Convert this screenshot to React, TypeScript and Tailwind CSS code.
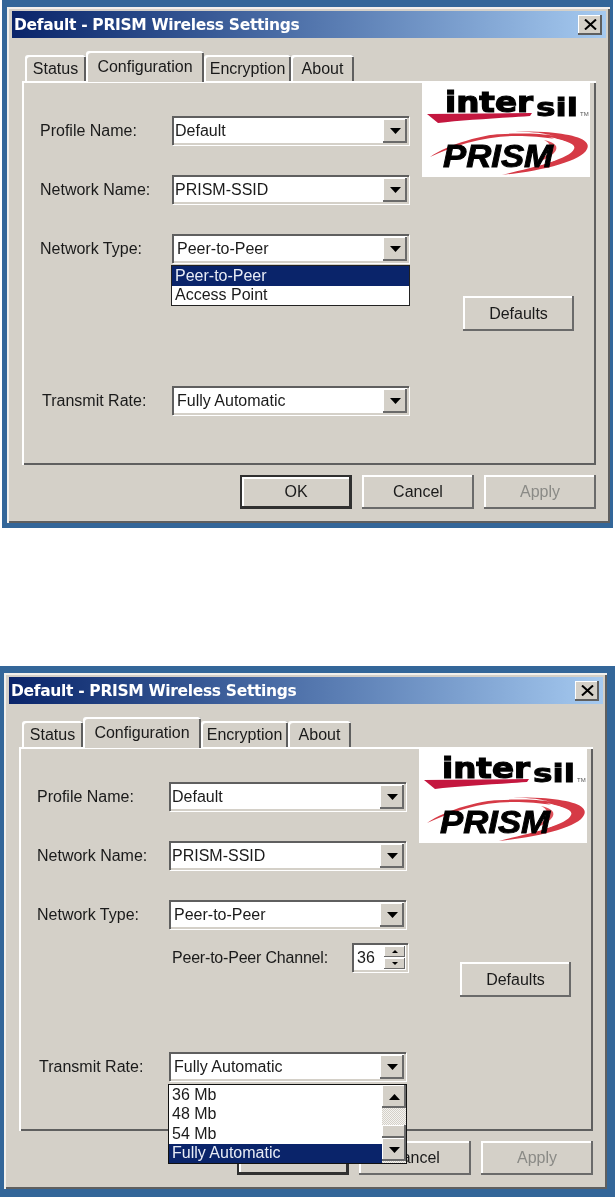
import React from "react";

const raised = "shadow-[inset_-2px_-2px_0_#6a6a6a,inset_2px_2px_0_#ffffff]";
const face = "bg-[#d4d0c8]";
const ui = "font-['Liberation_Sans',Arial,sans-serif] text-[16px] text-[#1a1a1a]";

function Arrow({ up = false, small = false }: { up?: boolean; small?: boolean }) {
  const w = small ? 6 : 11;
  const h = small ? 3 : 6;
  return (
    <svg width={w} height={h} viewBox="0 0 10 5" className="block" preserveAspectRatio="none">
      <path d={up ? "M5 0 L10 5 L0 5 Z" : "M0 0 L10 0 L5 5 Z"} fill="#000" />
    </svg>
  );
}

function Combo({ value, wide }: { value: string; wide?: boolean }) {
  return (
    <div className={`relative h-[29px] w-[237px] bg-white flex items-center ${wide ? "pl-[5px]" : "pl-[3px]"} shadow-[inset_2px_2px_0_#5f5f5f,inset_-2px_-2px_0_#d4d0c8,1px_1px_0_#ffffff]`}>
      <span className="leading-none">{value}</span>
      <div className={`absolute right-[2px] top-[3px] h-[24px] w-[24px] ${face} flex items-center justify-center shadow-[inset_-2px_-2px_0_#6a6a6a,inset_1px_1px_0_#ffffff]`}>
        <Arrow />
      </div>
    </div>
  );
}

function Row({ label, value, inset, wide, children }: { label: string; value: string; inset?: boolean; wide?: boolean; children?: React.ReactNode }) {
  return (
    <div className="relative flex items-center">
      <span className={`w-[150px] shrink-0 ${inset ? "pl-[20px]" : "pl-[18px]"}`}>{label}</span>
      <div className="relative">
        <Combo value={value} wide={wide} />
        {children}
      </div>
    </div>
  );
}

function Btn({ label, variant }: { label: string; variant?: "default" | "disabled" }) {
  if (variant === "default") {
    return (
      <div className={`w-[112px] h-[34px] ${face} flex items-center justify-center shadow-[inset_-3px_-3px_0_#303030,inset_2px_2px_0_#303030,inset_4px_4px_0_#ffffff]`}>
        {label}
      </div>
    );
  }
  return (
    <div className={`w-[112px] h-[34px] ${face} ${raised} flex items-center justify-center ${variant === "disabled" ? "text-[#8a8a86]" : ""}`}>
      {label}
    </div>
  );
}

function Tab({ label, active, w }: { label: string; active?: boolean; w: number }) {
  return (
    <div
      className={
        active
          ? `relative z-10 h-[31px] ${face} rounded-t-[3px] flex items-start justify-center pt-[4px] shadow-[inset_2px_2px_0_#ffffff,inset_-2px_0_0_#5f5f5f] -mb-[1px]`
          : `h-[26px] ${face} rounded-t-[3px] flex items-center justify-center pt-[2px] shadow-[inset_2px_2px_0_#ffffff,inset_-2px_0_0_#5f5f5f]`
      }
      style={{ width: w }}
    >
      {label}
    </div>
  );
}

function Logo() {
  return (
    <div className="w-[168px] h-[94px] bg-white overflow-hidden">
      <svg width="168" height="94" viewBox="0 0 168 94">
        <path d="M5 31 L110 30 L108 33 C80 35 40 37 16 40 Z" fill="#c4173f" />
        <text x="23" y="29" fontFamily="'DejaVu Sans',sans-serif" fontWeight="700" fontSize="28" fill="#000" stroke="#000" strokeWidth="1.2" textLength="88" lengthAdjust="spacingAndGlyphs">inter</text>
        <text x="114" y="33" fontFamily="'DejaVu Sans',sans-serif" fontWeight="700" fontSize="25" fill="#000" stroke="#000" strokeWidth="0.9" textLength="42" lengthAdjust="spacingAndGlyphs">sil</text>
        <text x="158" y="33" fontFamily="'Liberation Sans',sans-serif" fontSize="6" fill="#555">TM</text>
        <path d="M8 74 C34 56 84 46 122 49 C150 51 170 56 165 66 C160 78 120 88 80 92 C112 84 148 76 152 66 C156 58 128 54 100 53 C64 52 34 62 8 74 Z" fill="#d63a46" />
        <path d="M62 52 C88 47 116 48 132 53 C118 50 88 50 62 52 Z" fill="#ffffff" />
        <path d="M126 54 C140 56 150 60 148 66 C146 72 132 79 112 84 C128 76 138 71 139 65 C140 60 134 56 126 54 Z" fill="#ffffff" />
        <path d="M122 57 C131 59 136 62 134 67 C132 72 124 76 114 80 C122 74 128 70 128 65 C128 61 126 59 122 57 Z" fill="#e0555d" />
        <text x="21" y="84" fontFamily="'Liberation Sans',sans-serif" fontWeight="700" fontStyle="italic" fontSize="31" fill="#000" stroke="#000" strokeWidth="0.9" textLength="110" lengthAdjust="spacingAndGlyphs">PRISM</text>
      </svg>
    </div>
  );
}

function MenuItem({ label, selected }: { label: string; selected?: boolean }) {
  return (
    <div className={`h-[19.5px] pl-[3px] flex items-center leading-none ${selected ? "bg-[#0a246a] text-[#e8ecf6]" : "bg-white"}`}>
      {label}
    </div>
  );
}

function Dialog({ second }: { second?: boolean }) {
  return (
    <div className={second ? "bg-[#336699] h-[531px] w-[615px] pt-[7px] pl-[4px] pr-[8px] pb-[8px] flex" : "bg-[#336699] h-[528px] w-[611px] ml-[2px] pt-[7px] pl-[5px] pr-[3px] pb-[5px] flex"}>
      <div className={`w-full ${face} flex flex-col pt-[4px] shadow-[inset_2px_2px_0_#f2f0ec,inset_-2px_-2px_0_#5f5f5f]`}>
        <div className="h-[27px] mx-[5px] mr-[4px] shrink-0 bg-gradient-to-r from-[#0a246a] to-[#a6caf0] flex items-center justify-between pl-[2px] pr-[4px]">
          <span className="font-['DejaVu_Sans',sans-serif] font-bold text-[15.5px] text-white leading-none tracking-[-0.32px] pt-[2px]">Default - PRISM Wireless Settings</span>
          <div className={`w-[24px] h-[20px] ${face} flex items-center justify-center shadow-[inset_-2px_-2px_0_#5f5f5f,inset_1px_1px_0_#ffffff]`}>
            <svg width="13" height="11" viewBox="0 0 13 11"><path d="M1 0.5 L12 10.5 M12 0.5 L1 10.5" stroke="#000" strokeWidth="2" /></svg>
          </div>
        </div>

        <div className="flex items-end h-[43px] shrink-0 pl-[18px]">
          <Tab label="Status" w={61} />
          <Tab label="Configuration" active w={118} />
          <Tab label="Encryption" w={87} />
          <Tab label="About" w={63} />
        </div>

        <div className="ml-[15px] mr-[14px] h-[384px] shrink-0 flex shadow-[inset_2px_2px_0_#ffffff,inset_-2px_-2px_0_#5f5f5f]">
          <div className="flex flex-col w-[400px] pt-[35px] gap-[30px]">
            <Row label="Profile Name:" value="Default" />
            <Row label="Network Name:" value="PRISM-SSID" />
            <div className="relative z-10">
              <Row label="Network Type:" value="Peer-to-Peer" wide>
                {!second && (
                  <div className="absolute left-[-1px] top-[31px] w-[239px] border-[1.5px] border-[#222] bg-white">
                    <MenuItem label="Peer-to-Peer" selected />
                    <MenuItem label="Access Point" />
                  </div>
                )}
              </Row>
              <div className="h-[93px] pt-[14px] -mb-[30px] flex items-start pl-[153px]">
                {second && (
                  <div className="flex items-center">
                    <span className="w-[180px] tracking-[-0.2px]">Peer-to-Peer Channel:</span>
                    <div className="relative h-[29px] w-[56px] bg-white flex items-center pl-[5px] shadow-[inset_2px_2px_0_#5f5f5f,inset_-2px_-2px_0_#d4d0c8,1px_1px_0_#ffffff]">
                      36
                      <div className="absolute right-[3px] top-[3px] w-[21px] h-[23px] flex flex-col gap-[1px]">
                        <div className={`flex-1 ${face} flex items-center justify-center shadow-[inset_-1px_-1px_0_#6a6a6a,inset_1px_1px_0_#ffffff]`}><Arrow up small /></div>
                        <div className={`flex-1 ${face} flex items-center justify-center shadow-[inset_-1px_-1px_0_#6a6a6a,inset_1px_1px_0_#ffffff]`}><Arrow small /></div>
                      </div>
                    </div>
                  </div>
                )}
              </div>
            </div>
            <div className="relative z-20 mt-[30px]">
              <Row label="Transmit Rate:" value="Fully Automatic" inset wide>
                {second && (
                  <div className="absolute left-[-1px] top-[32px] w-[239px] h-[80px] border-[1.5px] border-[#111] bg-white flex">
                    <div className="flex-1 flex flex-col">
                      <MenuItem label="36 Mb" />
                      <MenuItem label="48 Mb" />
                      <MenuItem label="54 Mb" />
                      <MenuItem label="Fully Automatic" selected />
                    </div>
                    <div className="w-[24px] flex flex-col bg-[repeating-conic-gradient(#d4d0c8_0%_25%,#f4f3f0_0%_50%)] bg-[length:2px_2px]">
                      <div className={`h-[23px] ${face} flex items-center justify-center shadow-[inset_-2px_-2px_0_#6a6a6a,inset_1px_1px_0_#ffffff]`}><Arrow up /></div>
                      <div className="h-[17px]" />
                      <div className={`h-[13px] ${face} shadow-[inset_-2px_-2px_0_#6a6a6a,inset_1px_1px_0_#ffffff]`} />
                      <div className={`h-[23px] ${face} flex items-center justify-center shadow-[inset_-2px_-2px_0_#6a6a6a,inset_1px_1px_0_#ffffff]`}><Arrow /></div>
                    </div>
                  </div>
                )}
              </Row>
            </div>
          </div>
          <div className="flex flex-col pt-[2px]">
            <Logo />
            <div className="ml-[41px] mt-[119px] w-[111px] h-[35px]">
              <div className={`h-full ${face} ${raised} flex items-center justify-center`}>Defaults</div>
            </div>
          </div>
        </div>

        <div className="flex justify-end gap-[10px] pr-[14px] mt-[10px]">
          <Btn label="OK" variant="default" />
          <Btn label="Cancel" />
          <Btn label="Apply" variant="disabled" />
        </div>
      </div>
    </div>
  );
}

export default function App() {
  return (
    <div className={`${ui} w-[615px] h-[1199px] bg-white overflow-hidden flex flex-col gap-[138px] blur-[0.5px]`}>
      <Dialog />
      <Dialog second />
    </div>
  );
}
